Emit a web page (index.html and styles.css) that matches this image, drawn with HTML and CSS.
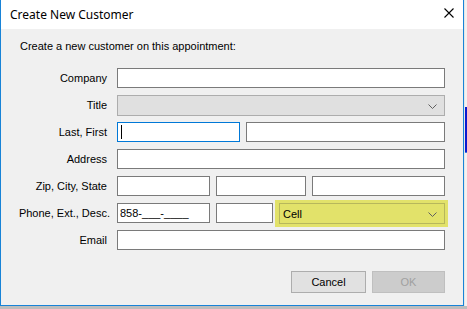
FILE: index.html
```html
<!DOCTYPE html>
<html lang="en">
<head>
  <meta charset="UTF-8">
  <title>Create New Customer</title>
  <link rel="stylesheet" href="styles.css">
</head>
<body>
  <div class="screen">
    <div class="dialog">
      <div class="titlebar">
        <span class="title-text">Create New Customer</span>
        <svg class="close" width="10" height="10" viewBox="0 0 10 10">
          <path d="M0.5 0.5 L9.5 9.5 M9.5 0.5 L0.5 9.5" stroke="#000" stroke-width="1.1" fill="none"/>
        </svg>
      </div>

      <div class="content">
        <div class="intro">Create a new customer on this appointment:</div>

        <div class="form">
          <div class="label">Company</div>
          <div class="fields"><div class="box"></div></div>

          <div class="label">Title</div>
          <div class="fields">
            <div class="box combo disabled">
              <svg class="chevron" width="9" height="5" viewBox="0 0 9 5"><path d="M0.5 0.5 L4.5 4.5 L8.5 0.5" stroke="#606060" fill="none"/></svg>
            </div>
          </div>

          <div class="label">Last, First</div>
          <div class="fields cols-name">
            <div class="box focused"><span class="caret"></span></div>
            <div class="box"></div>
          </div>

          <div class="label">Address</div>
          <div class="fields"><div class="box"></div></div>

          <div class="label">Zip, City, State</div>
          <div class="fields cols-zip">
            <div class="box"></div>
            <div class="box"></div>
            <div class="box"></div>
          </div>

          <div class="label label-wide">Phone, Ext., Desc.</div>
          <div class="fields cols-phone">
            <div class="box">858-___-____</div>
            <div class="box"></div>
            <div class="box combo highlight">
              <span>Cell</span>
              <svg class="chevron" width="9" height="5" viewBox="0 0 9 5"><path d="M0.5 0.5 L4.5 4.5 L8.5 0.5" stroke="#606060" fill="none"/></svg>
            </div>
          </div>

          <div class="label">Email</div>
          <div class="fields"><div class="box"></div></div>
        </div>

        <div class="buttons">
          <div class="btn">Cancel</div>
          <div class="btn btn-disabled">OK</div>
        </div>
      </div>
    </div>

    <div class="behind">
      <div class="behind-blue"></div>
    </div>
  </div>
</body>
</html>
```

FILE: styles.css
```css
body {
  margin: 0;
  font-family: "Liberation Sans", Arial, sans-serif;
  font-size: 11px;
  color: #000;
}

.screen {
  width: 467px;
  height: 309px;
  display: flex;
  align-items: flex-start;
  background: #bdbdbd;
  overflow: hidden;
}

.dialog {
  width: 464px;
  height: 306px;
  box-sizing: border-box;
  border: 1px solid #1883d7;
  border-top: none;
  background: #f0f0f0;
  display: flex;
  flex-direction: column;
}

.titlebar {
  height: 29px;
  background: #fff;
  display: flex;
  align-items: center;
  justify-content: space-between;
  padding: 0 9px 0 9px;
  flex-shrink: 0;
}

.title-text {
  font-family: "Noto Sans", sans-serif;
  font-size: 12px;
}

.close {
  margin-top: -3px;
}

.content {
  padding: 0 18px 0 0;
}

.intro {
  padding-left: 19px;
  margin-top: 11px;
  line-height: 13px;
}

.form {
  display: grid;
  grid-template-columns: 106px 1fr;
  grid-auto-rows: 20px;
  column-gap: 10px;
  row-gap: 7px;
  margin-top: 15px;
}

.label {
  text-align: right;
  line-height: 20px;
  white-space: nowrap;
}

.label-wide {
  margin-right: -3px;
}

.fields {
  display: grid;
  grid-template-columns: 1fr;
  column-gap: 6px;
}

.cols-name {
  grid-template-columns: 123px 1fr;
}

.cols-zip {
  grid-template-columns: 93px 90px 1fr;
}

.cols-phone {
  grid-template-columns: 93px 57px 1fr;
}

.box {
  height: 20px;
  box-sizing: border-box;
  border: 1px solid #7a7a7a;
  background: #fff;
  padding-left: 2px;
  line-height: 18px;
  position: relative;
  white-space: nowrap;
}

.box.focused {
  border-color: #0078d7;
}

.caret {
  position: absolute;
  left: 3px;
  top: 2px;
  width: 1px;
  height: 14px;
  background: #000;
}

.combo {
  height: 21px;
  display: flex;
  align-items: center;
  justify-content: space-between;
  padding: 0 7px 0 3px;
}

.combo.disabled {
  background: #e0e0e0;
  border-color: #adadad;
  justify-content: flex-end;
}

.combo.highlight {
  background: #e2e26a;
  border-color: #b7b75c;
  box-shadow: 0 0 0 3px #e2e26a, -1px 0 0 3px #e2e26a;
}

.chevron {
  display: block;
  margin-top: 1px;
}

.buttons {
  display: flex;
  justify-content: flex-end;
  gap: 6px;
  margin-top: 21px;
}

.btn {
  width: 75px;
  height: 22px;
  box-sizing: border-box;
  border: 1px solid #adadad;
  background: #e1e1e1;
  text-align: center;
  line-height: 20px;
}

.btn-disabled {
  width: 73px;
  background: #cccccc;
  border-color: #bfbfbf;
  color: #a0a0a0;
}

.behind {
  width: 3px;
  height: 306px;
  background: #f2f2f2;
  box-sizing: border-box;
  border-left: 1px solid #e6e6e6;
  padding-top: 107px;
}

.behind-blue {
  height: 45px;
  background: #0a1bd0;
  border-bottom: 1px solid #3b7be0;
}
```
